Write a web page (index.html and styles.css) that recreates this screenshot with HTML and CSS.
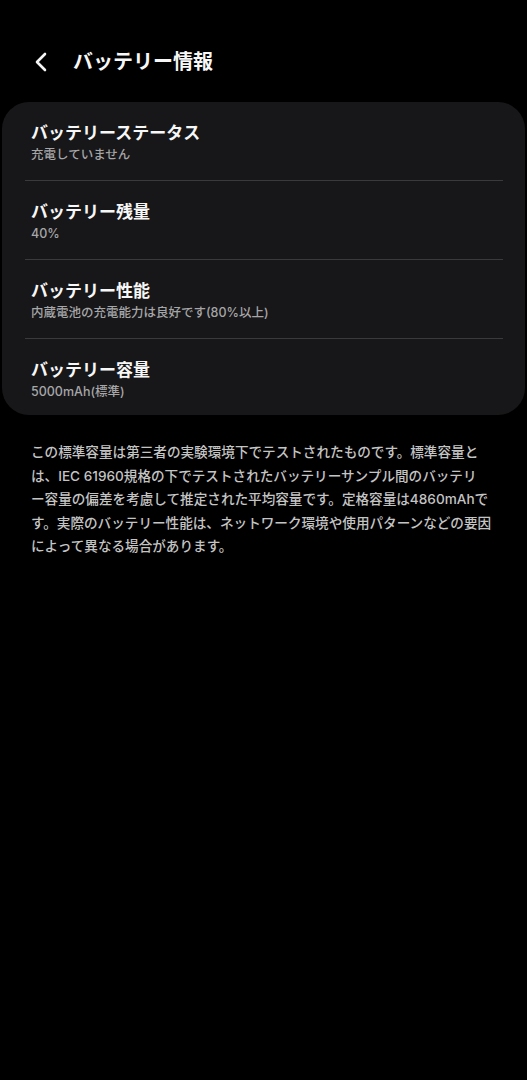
FILE: index.html
```html
<!DOCTYPE html>
<html lang="ja">
<head>
<meta charset="utf-8">
<link rel="stylesheet" href="styles.css">
</head>
<body>
<header class="header">
  <svg class="back" width="16" height="22" viewBox="0 0 16 22"><path d="M12 3 L4 11 L12 19" fill="none" stroke="#f5f5f5" stroke-width="2.6" stroke-linecap="round" stroke-linejoin="round"/></svg>
  <h1 class="title">バッテリー情報</h1>
</header>
<section class="card">
  <div class="row">
    <div class="row-title">バッテリーステータス</div>
    <div class="row-sub">充電していません</div>
  </div>
  <div class="divider"></div>
  <div class="row">
    <div class="row-title">バッテリー残量</div>
    <div class="row-sub">40%</div>
  </div>
  <div class="divider"></div>
  <div class="row">
    <div class="row-title">バッテリー性能</div>
    <div class="row-sub">内蔵電池の充電能力は良好です(80%以上)</div>
  </div>
  <div class="divider"></div>
  <div class="row row-last">
    <div class="row-title">バッテリー容量</div>
    <div class="row-sub">5000mAh(標準)</div>
  </div>
</section>
<p class="note">この標準容量は第三者の実験環境下でテストされたものです。標準容量と<br>は、IEC 61960規格の下でテストされたバッテリーサンプル間のバッテリ<br>ー容量の偏差を考慮して推定された平均容量です。定格容量は4860mAhで<br>す。実際のバッテリー性能は、ネットワーク環境や使用パターンなどの要因<br>によって異なる場合があります。</p>
</body>
</html>
```
FILE: styles.css
```css
html, body {
  margin: 0;
  padding: 0;
  background: #000;
}
body {
  font-family: "Inter", "Noto Sans CJK JP", "Noto Sans", sans-serif;
  color: #f5f5f5;
  width: 527px;
  min-height: 1080px;
}
.header {
  display: flex;
  align-items: center;
  height: 64px;
  padding: 30px 0 8px 33px;
}
.back {
  display: block;
  margin-right: 24px;
}
.title {
  margin: 0;
  font-size: 20px;
  font-weight: 700;
  line-height: 28px;
  color: #f7f7f7;
}
.card {
  margin: 0 2px;
  background: #171719;
  border-radius: 27px;
  overflow: hidden;
}
.row {
  padding: 20px 29px 17px;
}
.row-last {
  padding-bottom: 15px;
}
.row-title {
  font-size: 17px;
  font-weight: 700;
  line-height: 22px;
  color: #f7f7f7;
}
.row-sub {
  margin-top: 3px;
  font-size: 12.5px;
  font-weight: 500;
  line-height: 16px;
  color: #a6a6a8;
}
.divider {
  height: 1px;
  margin: 0 22px 0 23px;
  background: #3a3a3c;
}
.note {
  margin: 26px 20px 0 31px;
  font-size: 13.6px;
  font-weight: 500;
  line-height: 23.5px;
  color: #c4c4c4;
  white-space: nowrap;
}
```
